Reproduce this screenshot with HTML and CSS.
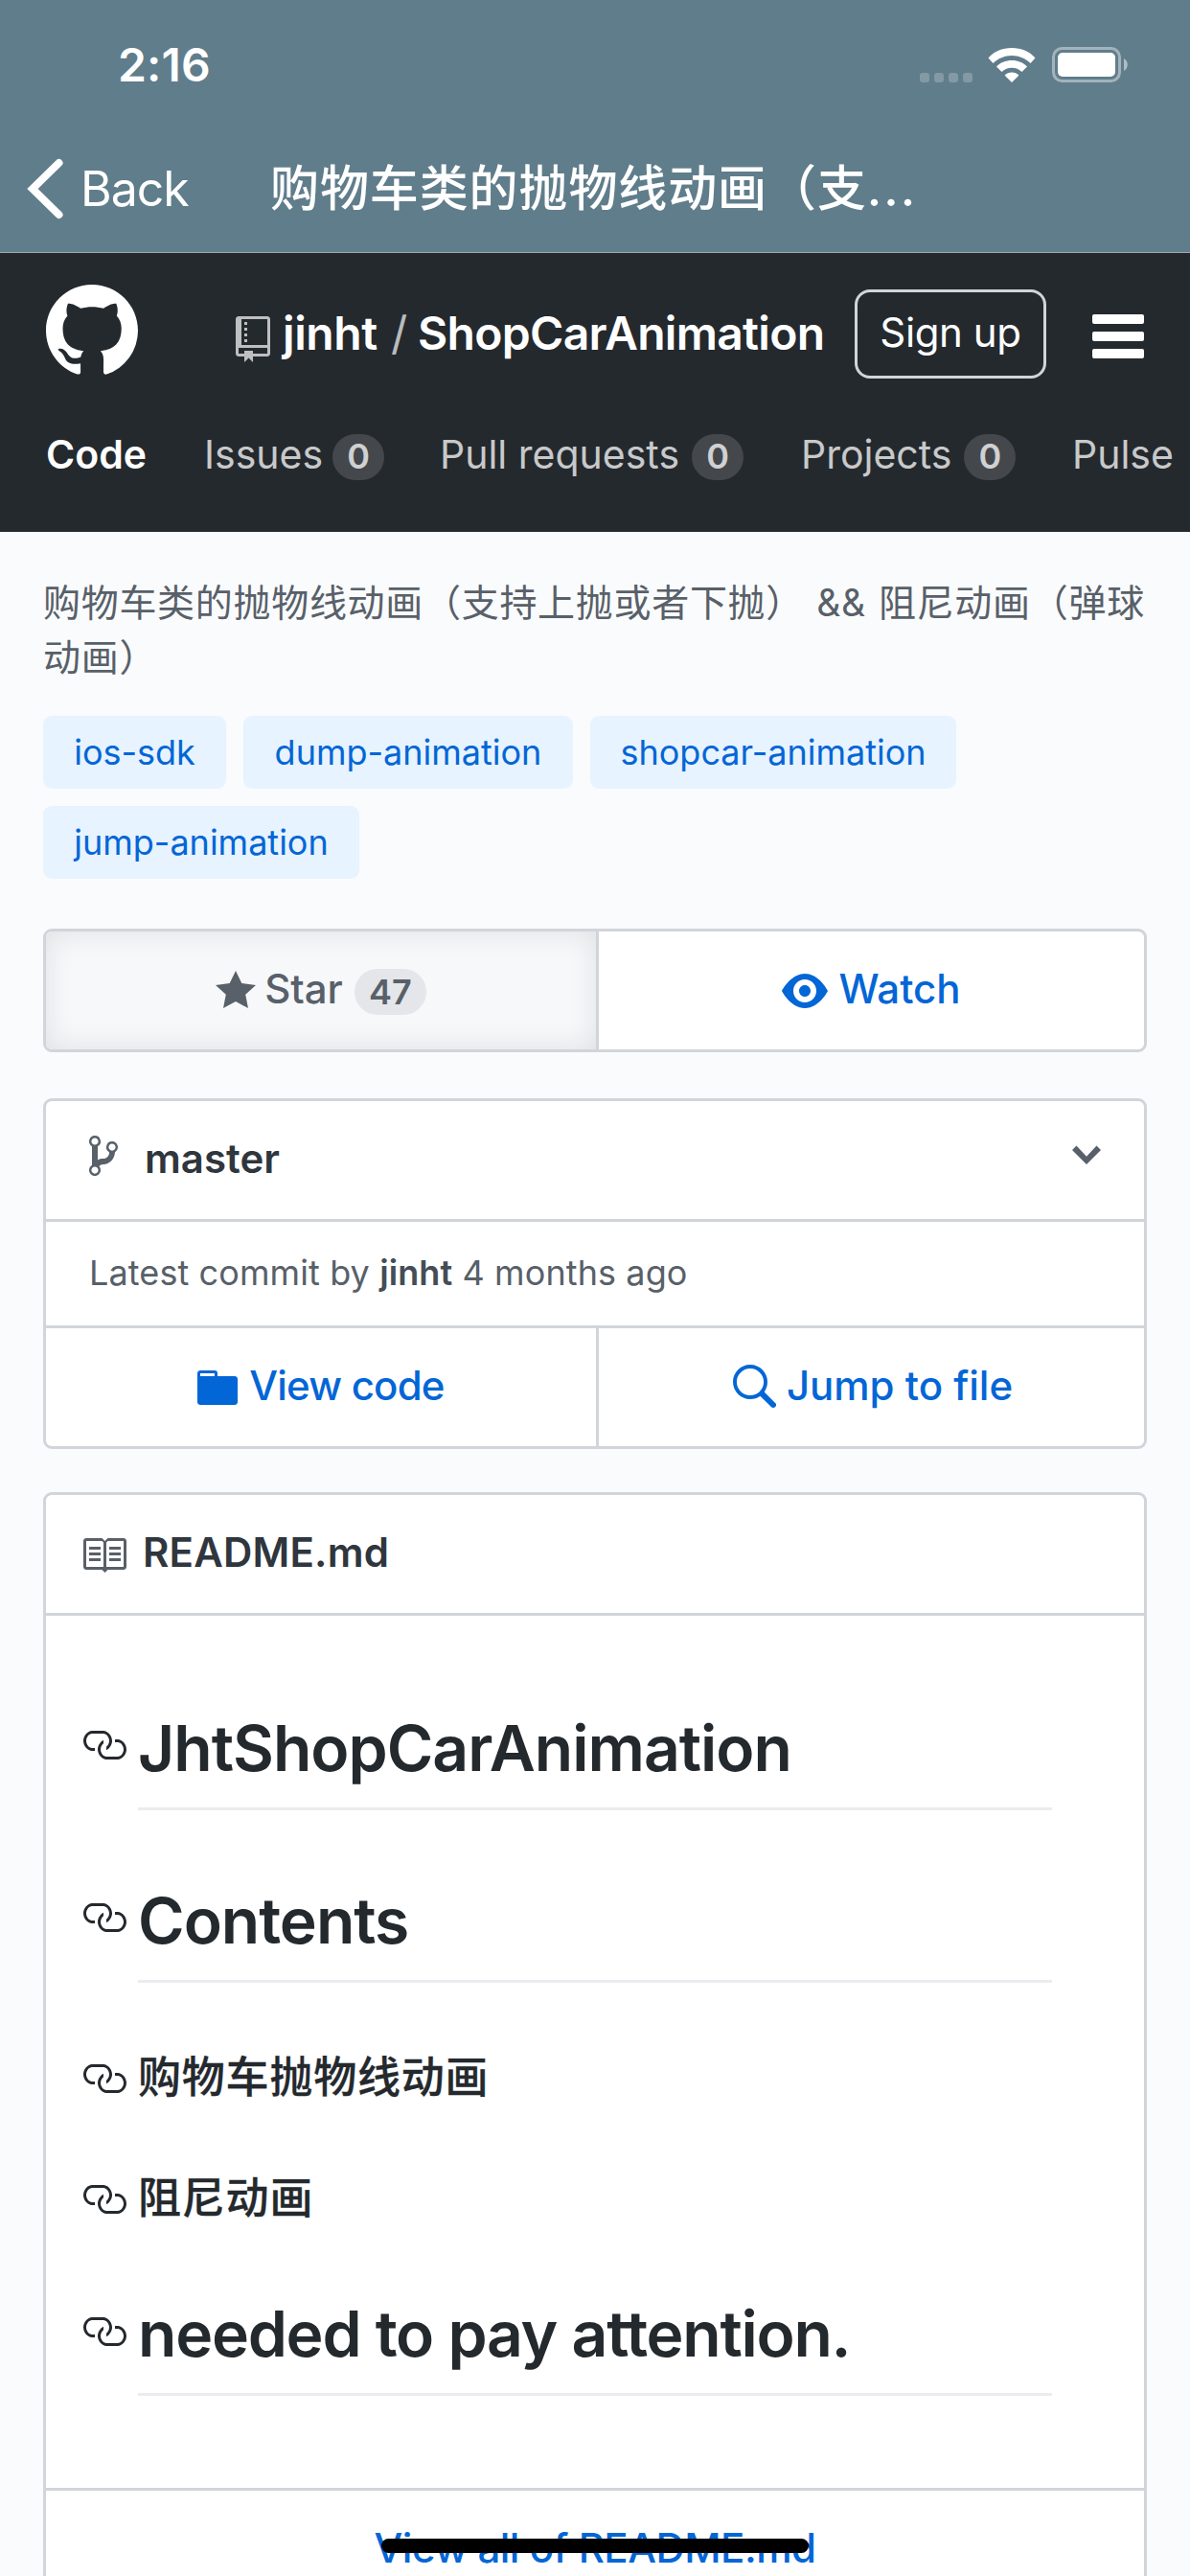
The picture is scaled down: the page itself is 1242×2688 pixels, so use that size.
FILE: index.html
```html
<!DOCTYPE html>
<html lang="zh-CN">
<head>
<meta charset="utf-8">
<title>jinht/ShopCarAnimation</title>
<link rel="stylesheet" href="styles.css">
</head>
<body>
<div class="screen">
  <header class="app-bar">
    <div class="status">
      <span class="time">2:16</span>
      <div class="status-icons">
        <div class="signal"><i></i><i></i><i></i><i></i></div>
        <svg class="wifi" viewBox="0 0 50 36" fill="#fff"><path d="M25 0C35 0 44 4 49.500 10.500L44.500 16C39.500 11 32.500 8 25 8S10.500 11 5.500 16L.5 10.500C6 4 15 0 25 0z"/><path d="M25 13C31.500 13 37 15.300 41 19.400L35.500 25C32.700 22.200 29 20.700 25 20.700S17.300 22.200 14.500 25L9 19.400C13 15.300 18.500 13 25 13z"/><path d="M25 25.500C28 25.500 30.500 26.700 32.300 28.700L25 36 17.700 28.700C19.500 26.700 22 25.500 25 25.500z"/></svg>
        <svg class="battery" viewBox="0 0 80 38"><rect x="1.500" y="1.500" width="69" height="34" rx="9" fill="none" stroke="#fff" stroke-opacity=".42" stroke-width="3"/><rect x="6" y="6" width="60" height="25" rx="5" fill="#fff"/><path d="M75 12c5 2.500 5 10.500 0 13z" fill="#fff" fill-opacity=".5"/></svg>
      </div>
    </div>
    <div class="title-bar">
      <svg class="back-icon" viewBox="0 0 38 64" fill="none" stroke="#fff" stroke-width="8" stroke-linecap="round" stroke-linejoin="miter"><path d="M33.500 5L6 32l27.500 27"/></svg>
      <span class="back">Back</span>
      <span class="page-title">购物车类的抛物线动画（支<span class="dots">...</span></span>
    </div>
  </header>

  <div class="repo-head">
    <div class="repo-row">
      <svg class="mark" viewBox="0 0 16 16" fill="#fff"><path fill-rule="evenodd" d="M8 0C3.580 0 0 3.580 0 8c0 3.540 2.290 6.530 5.470 7.590.4.070.55-.17.55-.38 0-.19-.01-.82-.01-1.490-2.010.37-2.530-.49-2.690-.94-.09-.23-.48-.94-.82-1.130-.28-.15-.68-.52-.01-.53.63-.01 1.080.58 1.230.82.72 1.210 1.870.87 2.330.66.070-.52.28-.87.51-1.070-1.780-.2-3.640-.89-3.640-3.950 0-.87.31-1.590.82-2.150-.08-.2-.36-1.020.08-2.120 0 0 .67-.21 2.200.82.64-.18 1.320-.27 2-.27.68 0 1.360.09 2 .27 1.530-1.040 2.200-.82 2.200-.82.44 1.100.16 1.920.08 2.120.51.56.82 1.270.82 2.150 0 3.070-1.870 3.750-3.650 3.950.29.25.54.73.54 1.480 0 1.070-.01 1.930-.01 2.200 0 .21.15.46.55.38A8.013 8.013 0 0 0 16 8c0-4.420-3.580-8-8-8z"/></svg>
      <div class="repo-name">
        <svg class="repo-icon" viewBox="0 0 12 16"><path fill-rule="evenodd" d="M4 9H3V8h1v1zm0-3H3v1h1V6zm0-2H3v1h1V4zm0-2H3v1h1V2zm8-1v12c0 .55-.45 1-1 1H6v2l-1.500-1.500L3 16v-2H1c-.55 0-1-.45-1-1V1c0-.55.45-1 1-1h10c.55 0 1 .45 1 1zm-1 10H1v2h2v-1h3v1h5v-2zm0-10H2v9h9V1z"/></svg>
        <b class="owner">jinht</b><span class="slash">/</span><b class="name">ShopCarAnimation</b>
      </div>
      <a class="signup">Sign up</a>
      <div class="menu"><i></i><i></i><i></i></div>
    </div>
    <nav class="tabs">
      <span class="tab active">Code</span>
      <span class="tab issues"><span>Issues</span><em>0</em></span>
      <span class="tab"><span>Pull requests</span><em>0</em></span>
      <span class="tab"><span>Projects</span><em>0</em></span>
      <span class="tab">Pulse</span>
    </nav>
  </div>

  <main class="content">
    <p class="desc">购物车类的抛物线动画（支持上抛或者下抛） &amp;&amp; 阻尼动画（弹球动画）</p>
    <div class="topics">
      <a class="t1">ios-sdk</a><a class="t2">dump-animation</a><a class="t3">shopcar-animation</a><a class="t4">jump-animation</a>
    </div>

    <div class="box split actions">
      <a class="cell pressed">
        <svg class="w14" viewBox="0 0 14 16"><path d="M14 6l-4.900-.64L7 1 4.900 5.360 0 6l3.600 3.260L2.670 14 7 11.670 11.330 14l-.93-4.740z"/></svg><span class="lbl star">Star</span><em>47</em>
      </a>
      <a class="cell">
        <svg class="w16" viewBox="0 0 16 16"><path fill-rule="evenodd" d="M8.060 2C3 2 0 8 0 8s3 6 8.060 6C13 14 16 8 16 8s-3-6-7.940-6zM8 12c-2.200 0-4-1.780-4-4 0-2.200 1.800-4 4-4 2.220 0 4 1.800 4 4 0 2.220-1.780 4-4 4zm2-4c0 1.110-.89 2-2 2-1.110 0-2-.89-2-2 0-1.110.89-2 2-2 1.110 0 2 .89 2 2z"/></svg><span class="lbl watch">Watch</span>
      </a>
    </div>

    <section class="box branch">
      <div class="branch-row">
        <svg class="w10" viewBox="0 0 10 16"><path fill-rule="evenodd" d="M10 5c0-1.110-.89-2-2-2a1.993 1.993 0 0 0-1 3.720v.3c-.02.52-.23.98-.63 1.380-.4.4-.86.61-1.380.63-.83.020-1.480.16-2 .45V4.720a1.993 1.993 0 0 0-1-3.720C.88 1 0 1.890 0 3a2 2 0 0 0 1 1.720v6.560c-.59.35-1 .99-1 1.720 0 1.110.89 2 2 2 1.110 0 2-.89 2-2 0-.53-.2-1-.53-1.360.09-.06.48-.41.59-.47.25-.11.56-.17.94-.17 1.050-.05 1.950-.45 2.750-1.250S8.950 7.770 9 6.730h-.02C9.590 6.370 10 5.730 10 5zM2 1.800c.66 0 1.200.55 1.200 1.200 0 .65-.55 1.200-1.200 1.200C1.350 4.200.8 3.650.8 3c0-.65.55-1.200 1.200-1.200zm0 12.410c-.66 0-1.200-.55-1.200-1.200 0-.65.55-1.200 1.200-1.200.65 0 1.200.55 1.200 1.200 0 .65-.55 1.200-1.200 1.200zm6-8c-.66 0-1.200-.55-1.200-1.200 0-.65.55-1.200 1.200-1.200.65 0 1.200.55 1.200 1.200 0 .65-.55 1.200-1.200 1.200z"/></svg>
        <b>master</b>
        <svg class="w10 caret" viewBox="0 0 10 16"><path d="M5 11L0 6l1.500-1.500L5 8.250 8.500 4.500 10 6z"/></svg>
      </div>
      <div class="commit">Latest commit by <b>jinht</b> 4 months ago</div>
      <div class="split">
        <a class="cell">
          <svg class="w14" viewBox="0 0 14 16"><path fill-rule="evenodd" d="M13 4H7V3c0-.66-.31-1-1-1H1c-.55 0-1 .45-1 1v10c0 .55.45 1 1 1h12c.55 0 1-.45 1-1V5c0-.55-.45-1-1-1zM6 4H1V3h5v1z"/></svg><span class="lbl code">View code</span>
        </a>
        <a class="cell">
          <svg class="w16" viewBox="0 0 16 16"><path fill-rule="evenodd" d="M15.700 13.300l-3.810-3.830A5.930 5.930 0 0 0 13 6c0-3.310-2.690-6-6-6S1 2.690 1 6s2.690 6 6 6c1.300 0 2.480-.41 3.470-1.110l3.830 3.810c.19.2.45.3.7.3.25 0 .52-.09.7-.3a.996.996 0 0 0 0-1.410v.01zM7 10.700c-2.590 0-4.700-2.110-4.700-4.700 0-2.590 2.110-4.700 4.700-4.700 2.590 0 4.700 2.110 4.700 4.700 0 2.590-2.110 4.700-4.700 4.700z"/></svg><span class="lbl jump">Jump to file</span>
        </a>
      </div>
    </section>

    <section class="box readme">
      <div class="readme-head">
        <svg class="w16" viewBox="0 0 16 16"><path fill-rule="evenodd" d="M3 5h4v1H3V5zm0 3h4V7H3v1zm0 2h4V9H3v1zm11-5h-4v1h4V5zm0 2h-4v1h4V7zm0 2h-4v1h4V9zm2-6v9c0 .55-.45 1-1 1H9.500l-1 1-1-1H2c-.55 0-1-.45-1-1V3c0-.55.45-1 1-1h5.500l1 1 1-1H15c.55 0 1 .45 1 1zm-8 .5L7.500 3H2v9h6V3.500zm7-.5H9.500l-.5.5V12h6V3z"/></svg>
        <b>README.md</b>
      </div>
      <div class="readme-body">
        <div class="heading"><svg class="w16" viewBox="0 0 16 16"><path id="link" d="M4 9h1v1H4c-1.500 0-3-1.690-3-3.500S2.550 3 4 3h4c1.450 0 3 1.690 3 3.500 0 1.410-.91 2.720-2 3.250V8.590c.58-.45 1-1.270 1-2.090C10 5.220 8.980 4 8 4H4c-.98 0-2 1.220-2 2.500S3 9 4 9zm9-3h-1v1h1c1 0 2 1.220 2 2.500S13.980 12 13 12H9c-.98 0-2-1.220-2-2.500 0-.83.42-1.640 1-2.090V6.250c-1.090.53-2 1.840-2 3.250C6 11.310 7.550 13 9 13h4c1.450 0 3-1.690 3-3.500S14.500 6 13 6z"/></svg><h1 class="h-a">JhtShopCarAnimation</h1></div>
        <div class="heading second"><svg class="w16" viewBox="0 0 16 16"><use href="#link"/></svg><h1 class="h-b">Contents</h1></div>
        <div class="heading sub first"><svg class="w16" viewBox="0 0 16 16"><use href="#link"/></svg><h3>购物车抛物线动画</h3></div>
        <div class="heading sub"><svg class="w16" viewBox="0 0 16 16"><use href="#link"/></svg><h3>阻尼动画</h3></div>
        <div class="heading third"><svg class="w16" viewBox="0 0 16 16"><use href="#link"/></svg><h1 class="h-c">needed to pay attention.</h1></div>
      </div>
      <a class="view-all">View all of README.md</a>
    </section>
  </main>
  <div class="home-indicator"></div>
</div>
</body>
</html>
```
FILE: styles.css
```css
* { box-sizing: border-box; }
body {
  margin: 0;
  background: #fafbfc;
  font-family: Inter, "Noto Sans CJK SC", sans-serif;
  font-feature-settings: "calt" 0;
  color: #24292e;
}
svg { display: block; flex: none; fill: currentColor; }
b { font-weight: 600; }
em { font-style: normal; }
.screen {
  position: relative;
  width: 1242px;
  height: 2688px;
  overflow: hidden;
}

/* App bar */
.app-bar {
  height: 264px;
  background: #607d8b;
  border-bottom: 1px solid #a0a9b0;
  color: #fff;
}
.status {
  display: flex;
  justify-content: space-between;
  align-items: center;
  height: 135px;
  padding: 0 64px 0 123px;
}
.time { font-size: 48px; line-height: 58px; font-weight: 600; letter-spacing: .2px; }
.status-icons { display: flex; align-items: flex-end; height: 38px; }
.signal { display: flex; gap: 5px; margin: 0 16px 1px 0; }
.signal i { width: 10px; height: 10px; border-radius: 3px; background: rgba(255, 255, 255, .22); }
svg.wifi { width: 50px; height: 36px; margin: 0 17px 1px 0; fill: #fff; }
.battery { width: 80px; height: 38px; }
.title-bar { display: flex; align-items: center; height: 124px; padding-left: 28px; }
svg.back-icon { width: 38px; height: 64px; fill: none; }
.back { width: 198px; margin-left: 18px; font-size: 50px; letter-spacing: -1px; }
.page-title { font-size: 51px; line-height: 60px; font-weight: 500; letter-spacing: .9px; white-space: nowrap; }
.dots { letter-spacing: 2px; }

/* Repository header */
.repo-head {
  height: 291px;
  padding: 33px 0 0 48px;
  background: #24292e;
  color: #fff;
  overflow: hidden;
}
.repo-row { display: flex; height: 96px; align-items: flex-start; }
svg.mark { width: 96px; height: 96px; fill: #fff; }
.repo-name {
  display: flex;
  width: 646px;
  margin-left: 102px;
  padding-top: 22px;
  font-size: 48px;
  line-height: 58px;
  white-space: nowrap;
}
.repo-icon { width: 36px; height: 48px; margin: 11px 13px 0 0; color: rgba(255, 255, 255, .7); }
.owner { width: 113px; letter-spacing: -.4px; }
.slash { width: 28px; color: rgba(255, 255, 255, .7); }
.name { letter-spacing: -.7px; }
.signup {
  width: 200px;
  height: 93px;
  margin-top: 5px;
  border: 3px solid #d1d5da;
  border-radius: 16px;
  font-size: 42px;
  line-height: 84px;
  text-align: center;
  letter-spacing: -.4px;
}
.menu { display: grid; gap: 8px; width: 54px; margin: 31px 0 0 48px; }
.menu i { height: 10px; border-radius: 2px; background: #fff; }
.tabs {
  display: grid;
  grid-template-columns: 165px 246px 377px 283px 160px;
  align-items: center;
  height: 48px;
  margin-top: 60px;
  font-size: 41px;
  line-height: 50px;
  white-space: nowrap;
  color: rgba(255, 255, 255, .75);
}
.tab { display: flex; align-items: center; margin-top: -6px; }
.tab.active { font-weight: 600; color: #fff; }
.tab em {
  width: 54px;
  height: 48px;
  margin: 6px 0 0 13px;
  border-radius: 24px;
  background: rgba(255, 255, 255, .15);
  font-size: 36px;
  line-height: 47px;
  font-weight: 600;
  text-align: center;
}
.tab.issues em { margin-left: 10px; }

/* Content */
.content { padding: 0 45px; color: #586069; }
.desc {
  height: 114px;
  margin: 45px -8px 0 0;
  font-size: 39px;
  line-height: 57px;
  letter-spacing: .7px;
  word-spacing: 1.5px;
}
.topics { display: flex; flex-wrap: wrap; gap: 18px; margin-top: 33px; }
.topics a {
  height: 76px;
  border-radius: 9px;
  background: #e7f3ff;
  color: #0366d6;
  font-size: 36px;
  line-height: 76px;
  text-align: center;
  white-space: nowrap;
}
.t1 { width: 191px; }
.t2 { width: 344px; }
.t3 { width: 382px; }
.t4 { width: 330px; }

.box { border: 3px solid #d1d5da; border-radius: 9px; background: #fff; overflow: hidden; }
.split { display: grid; grid-template-columns: 577px 1fr; }
.actions { height: 129px; margin-top: 52px; }
.cell {
  display: flex;
  justify-content: center;
  align-items: center;
  height: 123px;
  color: #0366d6;
  font-size: 42px;
  font-weight: 500;
  white-space: nowrap;
}
.cell:first-child { border-right: 3px solid #d1d5da; }
.cell.pressed { background: #f6f8fa; color: #586069; box-shadow: inset 0 0 30px rgba(27, 31, 35, .11); }
.w10 { width: 30px; height: 48px; }
.w14 { width: 42px; height: 48px; }
.w16 { width: 48px; height: 48px; }
.lbl { margin: -4px 0 0 11px; line-height: 50px; }
.lbl.star { margin-left: 9px; }
.lbl.code { margin-left: 12px; letter-spacing: -.8px; }
.cell em {
  width: 75px;
  height: 48px;
  margin: 3px 0 0 12px;
  border-radius: 24px;
  background: rgba(27, 31, 35, .08);
  font-size: 36px;
  line-height: 48px;
  text-align: center;
  font-weight: 600;
}

.branch { height: 366px; margin-top: 48px; }
.branch-row {
  display: flex;
  height: 126px;
  padding: 33px 45px 0;
  border-bottom: 3px solid #d1d5da;
}
.branch-row b { flex: 1; margin: 3px 0 0 28px; font-size: 42px; line-height: 48px; color: #2f363d; }
.commit {
  height: 111px;
  padding-left: 45px;
  border-bottom: 3px solid #d1d5da;
  font-size: 36px;
  line-height: 106px;
  letter-spacing: .1px;
  white-space: nowrap;
}
.commit b { color: #444d56; }

.readme { height: 1200px; margin-top: 45px; }
.readme-head { display: flex; height: 126px; padding: 39px 36px; border-bottom: 3px solid #d1d5da; }
.readme-head b { margin-left: 17px; font-size: 42px; line-height: 42px; letter-spacing: .2px; color: #2f363d; }
.readme-body { height: 913px; padding: 97px 96px 0 36px; border-bottom: 3px solid #d1d5da; color: #24292e; }
.heading { display: flex; height: 106px; gap: 12px; }
.heading .w16 { margin-top: 14px; }
.heading h1 {
  flex: 1;
  height: 106px;
  margin: 0;
  border-bottom: 3px solid #eaecef;
  font-size: 66px;
  line-height: 82px;
  font-weight: 600;
  letter-spacing: -1px;
  white-space: nowrap;
}
.heading .h-c { letter-spacing: -1.25px; }
.heading.second { margin-top: 74px; }
.heading.sub { height: 56px; margin-top: 70px; }
.heading.sub .w16 { margin-top: 6px; }
.heading h3 { margin: 0; font-size: 45px; line-height: 57px; font-weight: 500; letter-spacing: .8px; -webkit-text-stroke: .3px currentColor; }
.heading.third { margin-top: 73px; }
.heading.third .w16 { margin-top: 15px; }
.view-all {
  display: block;
  height: 123px;
  color: #0366d6;
  font-size: 42px;
  line-height: 119px;
  font-weight: 500;
  letter-spacing: -.5px;
  text-align: center;
}

.home-indicator {
  position: absolute;
  left: 398px;
  top: 2649px;
  width: 446px;
  height: 15px;
  border-radius: 8px;
  background: #000;
}
```
